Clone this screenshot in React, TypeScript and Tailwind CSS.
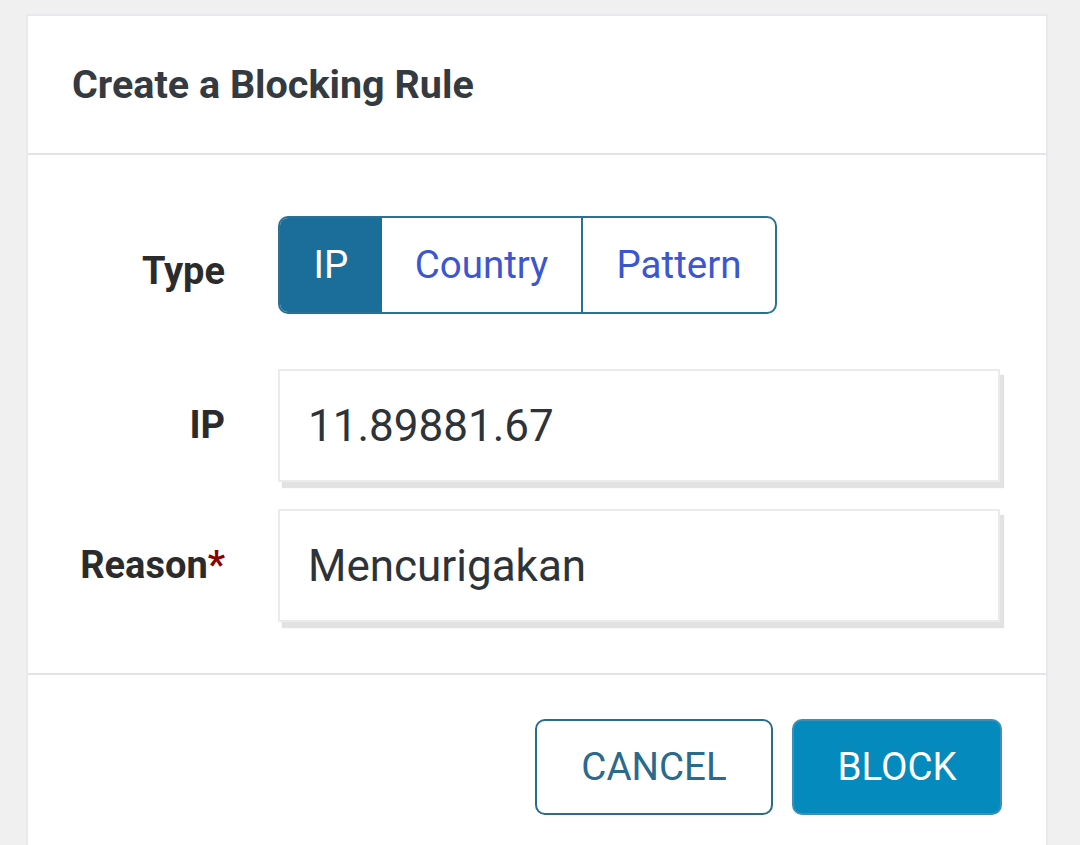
import React from "react";

export default function App() {
  const font = { fontFamily: "Roboto, 'Noto Sans', sans-serif" };
  return (
    <div className="w-[1080px] h-[845px] overflow-hidden bg-[#f0f0f0] pl-[26px] pr-[32px] pt-[14px]" style={font}>
      <div className="h-[900px] bg-white border-2 border-b-0 border-[#e7e9ec]">
        <div className="h-[139px] flex items-center pl-[44px] border-b-2 border-[#e3e4e6]">
          <h1 className="text-[39.5px] font-bold text-[#343a40]">Create a Blocking Rule</h1>
        </div>
        <div className="pt-[61px] pb-[51px] border-b-2 border-[#e3e4e6]">
          <div className="flex items-center">
            <div className="w-[197px] pt-[12px] text-right text-[38px] font-bold text-[#2b2b2b]">Type</div>
            <div className="ml-[53px] flex h-[98px] rounded-[10px] border-2 border-[#2b7193] overflow-hidden">
              <div className="w-[102px] flex items-center justify-center bg-[#1c6e9a] text-white text-[38.5px]">IP</div>
              <div className="w-[201px] flex items-center justify-center border-r-2 border-[#2b7193] text-[#3b56cf] text-[38.5px]">Country</div>
              <div className="w-[192px] flex items-center justify-center text-[#3b56cf] text-[38.5px]">Pattern</div>
            </div>
          </div>
          <div className="flex items-center mt-[55px]">
            <div className="w-[197px] text-right text-[38px] font-bold text-[#2b2b2b]">IP</div>
            <div className="ml-[53px] w-[722px] h-[113px] border-2 border-[#ebebeb] shadow-[4px_6px_1px_#e2e2e2] flex items-center pl-[28px] text-[44px] text-[#2d3338]">11.89881.67</div>
          </div>
          <div className="flex items-center mt-[27px]">
            <div className="w-[197px] text-right text-[38px] font-bold text-[#2b2b2b]">
              Reason<span className="text-[#8b0000]">*</span>
            </div>
            <div className="ml-[53px] w-[722px] h-[113px] border-2 border-[#ebebeb] shadow-[4px_6px_1px_#e2e2e2] flex items-center pl-[28px] text-[44px] text-[#2d3338]">Mencurigakan</div>
          </div>
        </div>
        <div className="flex justify-end gap-[19px] pt-[44px] pr-[44px]">
          <button className="w-[238px] h-[96px] rounded-[10px] border-2 border-[#2b6b8c] bg-white text-[#2a6a8c] text-[38.5px]">CANCEL</button>
          <button className="w-[210px] h-[96px] rounded-[10px] border-2 border-[#3d8fb5] bg-[#058abe] text-white text-[38.5px]">BLOCK</button>
        </div>
      </div>
    </div>
  );
}
